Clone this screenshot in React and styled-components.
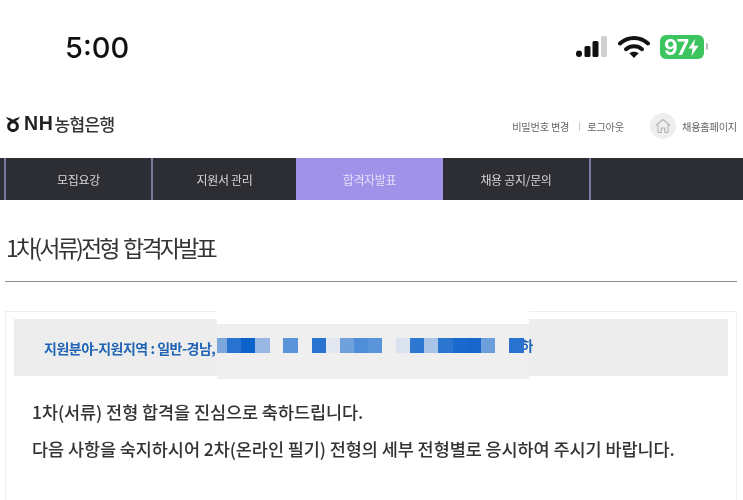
import React from 'react';
import styled, { createGlobalStyle } from 'styled-components';

const KR = `"Noto Sans CJK KR", "Noto Sans", sans-serif`;

const GlobalStyle = createGlobalStyle`
  html, body {
    margin: 0;
    padding: 0;
    background: #fff;
    overflow: hidden;
  }
  body {
    font-family: ${KR};
  }
`;

const Page = styled.div`
  width: 743px;
  height: 500px;
  overflow: hidden;
  background: #fff;
  filter: blur(0.35px);
`;

const StatusBar = styled.div`
  height: 98px;
  display: flex;
  justify-content: space-between;
  align-items: flex-start;
  padding: 28px 39px 0 65px;
  box-sizing: border-box;
`;

const Time = styled.div`
  font-family: Inter, "Liberation Sans", sans-serif;
  font-size: 29px;
  line-height: 39px;
  font-weight: 500;
  color: #111;
`;

const StatusIcons = styled.div`
  display: flex;
  align-items: center;
  gap: 10px;
  height: 38px;
`;

const Battery = styled.div`
  position: relative;
  width: 44px;
  height: 24px;
  border-radius: 6px;
  background: #3cc45e;
  color: #fff;
  display: flex;
  align-items: center;
  padding-left: 4px;
  box-sizing: border-box;
  font-family: Inter, "Liberation Sans", sans-serif;
  font-weight: 700;
  font-size: 21px;
  letter-spacing: -0.5px;
  &::after {
    content: '';
    position: absolute;
    right: -4px;
    top: 8px;
    width: 2px;
    height: 7px;
    border-radius: 0 2px 2px 0;
    background: #b9b9b9;
  }
`;

const Header = styled.header`
  height: 60px;
  display: flex;
  justify-content: space-between;
  align-items: center;
  padding: 0 6px 9px;
  box-sizing: border-box;
`;

const Logo = styled.div`
  display: flex;
  align-items: center;
  gap: 4px;
  color: #222;
`;

const LogoNH = styled.span`
  font-family: "Liberation Sans", sans-serif;
  font-size: 19.5px;
  font-weight: 700;
  letter-spacing: 0.6px;
`;

const LogoName = styled.span`
  font-family: ${KR};
  font-size: 17px;
  font-weight: 500;
  letter-spacing: -0.6px;
  margin-left: -3px;
  color: #333;
`;

const Util = styled.div`
  display: flex;
  align-items: center;
  font-size: 10.2px;
  letter-spacing: -0.2px;
  color: #666;
  margin-top: 5px;
`;

const UtilSep = styled.span`
  width: 1px;
  height: 9px;
  background: #ccc;
  margin: 0 7px 0 10px;
`;

const HomeCircle = styled.span`
  width: 26px;
  height: 26px;
  border-radius: 50%;
  background: #eee;
  display: flex;
  align-items: center;
  justify-content: center;
  margin: 0 6px 0 26px;
`;

const Nav = styled.nav`
  height: 42px;
  background: #2d2e33;
  display: flex;
  padding-left: 4px;
`;

const NavItem = styled.div`
  width: ${p => p.$w}px;
  box-sizing: border-box;
  display: flex;
  align-items: center;
  justify-content: center;
  font-size: 12px;
  letter-spacing: -0.3px;
  color: ${p => (p.$active ? '#e4dffa' : '#d6d6d8')};
  background: ${p => (p.$active ? '#a092e8' : 'transparent')};
  border-left: ${p => (p.$plain ? '0' : '2px solid #7b779f')};
`;

const Main = styled.main`
  padding: 0 6px 0 5px;
`;

const Title = styled.h1`
  margin: 0;
  height: 82px;
  box-sizing: border-box;
  padding: 30px 0 0 1px;
  border-bottom: 1px solid #8f8f8f;
  font-size: 23px;
  line-height: 34px;
  font-weight: 400;
  letter-spacing: -2.8px;
  word-spacing: 3px;
  color: #333;
`;

const Card = styled.section`
  position: relative;
  margin-top: 29px;
  height: 220px;
  border: 1.5px solid #eeeeee;
  padding: 7px 8px;
`;

const Notice = styled.div`
  height: 57px;
  background: #ededed;
  display: flex;
  align-items: center;
  padding-left: 30px;
  font-size: 14px;
  font-weight: 700;
  letter-spacing: -0.5px;
  color: #1f64b4;
`;

const Patch = styled.div`
  position: absolute;
  left: 211px;
  top: -3px;
  width: 312px;
  height: 70px;
  padding-top: 15px;
  box-sizing: border-box;
  background: #fff;
  &::before {
    content: '';
    position: absolute;
    inset: 15px 0 0 0;
    background: #efefef;
  }
`;

const Pixels = styled.div`
  position: relative;
  display: flex;
  height: 15px;
  margin-top: 14px;
`;

const Pixel = styled.span`
  flex: none;
  width: ${p => p.$w}px;
  background: ${p => p.$c};
`;

const CutChar = styled.span`
  flex: none;
  width: 9px;
  overflow: hidden;
  display: flex;
  justify-content: flex-end;
  font-size: 14px;
  line-height: 15px;
  font-weight: 700;
  color: #1f64b4;
`;

const Body = styled.div`
  padding: 24px 0 0 18px;
`;

const Para = styled.p`
  margin: 0 0 13px;
  font-size: 17.5px;
  line-height: 24px;
  font-weight: 500;
  letter-spacing: -0.08px;
  color: #333;
  white-space: nowrap;
`;

const pixels = [
  [10, '#7ba7dc'],
  [14.2, '#2a72cf'],
  [14.2, '#0d62cb'],
  [14.3, '#98b8e3'],
  [13.6, 'transparent'],
  [14.7, '#5b94d8'],
  [14, 'transparent'],
  [14, '#2a72cf'],
  [14, '#e2e7f0'],
  [14.5, '#6fa1dd'],
  [14, '#4f8dd8'],
  [14, '#5a94d9'],
  [14, 'transparent'],
  [14, '#dbe2ef'],
  [14, '#2e78d2'],
  [14, '#a9c4e6'],
  [15, '#2c76d0'],
  [14, '#1a69cc'],
  [14, '#1766cb'],
  [14, '#6b9eda'],
  [14, 'transparent'],
  [15, '#2a72cf'],
];

function SignalIcon() {
  return (
    <svg width="32" height="22" viewBox="0 0 32 22">
      <rect x="0" y="14.5" width="6" height="6.5" rx="3" fill="#111" />
      <rect x="8.5" y="10" width="6" height="11" rx="1.6" fill="#111" />
      <rect x="16.5" y="5" width="6" height="16" rx="1.6" fill="#111" />
      <rect x="25" y="0" width="6" height="21" rx="1.6" fill="#cfcfcf" />
    </svg>
  );
}

function WifiIcon() {
  return (
    <svg width="32" height="24" viewBox="0 0 32 24" fill="none">
      <path d="M2 8.5C10 1 22 1 30 8.5" stroke="#111" strokeWidth="4" strokeLinecap="round" />
      <path d="M8 14.2C12.6 10.3 19.4 10.3 24 14.2" stroke="#111" strokeWidth="4" strokeLinecap="round" />
      <path d="M16 23L11.4 18.2C14 16.2 18 16.2 20.6 18.2Z" fill="#111" />
    </svg>
  );
}

function BoltIcon() {
  return (
    <svg width="11" height="17" viewBox="0 0 11 17">
      <path d="M7 0L0.5 9.5H4.5L3.5 17L10.5 6.8H6Z" fill="#fff" />
    </svg>
  );
}

function LogoMark() {
  return (
    <svg width="14" height="16" viewBox="0 0 14 16" fill="none">
      <circle cx="7" cy="10.2" r="4.4" stroke="#1c1c1c" strokeWidth="3" />
      <path d="M0.3 0.5C0.7 3.6 3 5.2 7 5.2C11 5.2 13.3 3.6 13.7 0.5C12.4 1.7 11.2 2.2 9.8 2.2L7 3.8L4.2 2.2C2.8 2.2 1.6 1.7 0.3 0.5Z" fill="#1c1c1c" />
    </svg>
  );
}

function HomeIcon() {
  return (
    <svg width="16" height="16" viewBox="0 0 16 16" fill="none" stroke="#b3b3b3" strokeWidth="1.1">
      <path d="M1 7.5L8 1.5L15 7.5" strokeLinejoin="round" />
      <path d="M3 6.5V14.5H6.3V10H9.7V14.5H13V6.5" strokeLinejoin="round" />
    </svg>
  );
}

export default function App() {
  return (
    <Page>
      <GlobalStyle />
      <StatusBar>
        <Time>5:00</Time>
        <StatusIcons>
          <SignalIcon />
          <WifiIcon />
          <Battery>
            97
            <BoltIcon />
          </Battery>
        </StatusIcons>
      </StatusBar>
      <Header>
        <Logo>
          <LogoMark />
          <LogoNH>NH</LogoNH>
          <LogoName>농협은행</LogoName>
        </Logo>
        <Util>
          <span>비밀번호 변경</span>
          <UtilSep />
          <span>로그아웃</span>
          <HomeCircle>
            <HomeIcon />
          </HomeCircle>
          <span>채용홈페이지</span>
        </Util>
      </Header>
      <Nav>
        <NavItem $w={147}>모집요강</NavItem>
        <NavItem $w={145}>지원서 관리</NavItem>
        <NavItem $w={147} $active $plain>합격자발표</NavItem>
        <NavItem $w={146} $plain>채용 공지/문의</NavItem>
        <NavItem $w={20} />
      </Nav>
      <Main>
        <Title>1차(서류)전형 합격자발표</Title>
        <Card>
          <Notice>지원분야-지원지역 : 일반-경남,</Notice>
          <Patch>
            <Pixels>
              {pixels.map(([w, c], i) => (
                <Pixel key={i} $w={w} $c={c} />
              ))}
              <CutChar>하</CutChar>
            </Pixels>
          </Patch>
          <Body>
            <Para>1차(서류) 전형 합격을 진심으로 축하드립니다.</Para>
            <Para>다음 사항을 숙지하시어 2차(온라인 필기) 전형의 세부 전형별로 응시하여 주시기 바랍니다.</Para>
          </Body>
        </Card>
      </Main>
    </Page>
  );
}
